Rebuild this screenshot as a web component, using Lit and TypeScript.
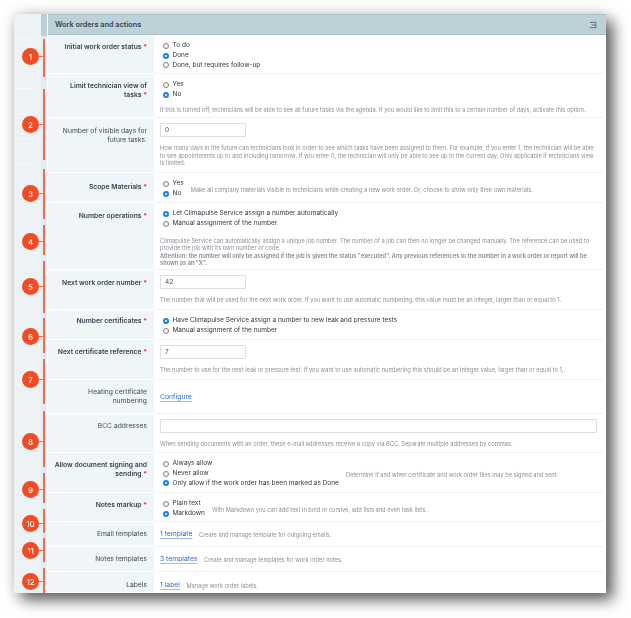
import { LitElement, html, css, nothing } from "lit";
import { customElement } from "lit/decorators.js";

type Opt = [string, boolean];
interface Row {
  h: number; pt: number; lp: number; label: string; bold?: boolean; star?: boolean;
  radios?: Opt[]; input?: string; wide?: boolean; link?: string; help?: any; inlineHelp?: string; helpGap?: number; helpPt?: number;
}

const rows: Row[] = [
  { h: 39, pt: 5, lp: 7, label: "Initial work order status", bold: true, star: true,
    radios: [["To do", false], ["Done", true], ["Done, but requires follow-up", false]] },
  { h: 44, pt: 5, lp: 7, label: "Limit technician view of\ntasks", bold: true, star: true,
    radios: [["Yes", false], ["No", true]], helpPt: 6,
    help: "If this is turned off, technicians will be able to see all future tasks via the agenda. If you would like to limit this to a certain number of days, activate this option." },
  { h: 55, pt: 5, lp: 8, label: "Number of visible days for\nfuture tasks.", input: "0", helpPt: 7,
    help: "How many days in the future can technicians look in order to see which tasks have been assigned to them. For example, if you enter 1, the technician will be able to see appointments up to and including tomorrow. If you enter 0, the technician will only be able to see up to the current day. Only applicable if technicians view is limited." },
  { h: 30, pt: 5, lp: 9, label: "Scope Materials", bold: true, star: true, radios: [["Yes", false], ["No", true]],
    inlineHelp: "Make all company materials visible to technicians while creating a new work order. Or, choose to show only their own materials." },
  { h: 67, pt: 5, lp: 8, label: "Number operations", bold: true, star: true, helpPt: 8,
    radios: [["Let Climapulse Service assign a number automatically", true], ["Manual assignment of the number", false]],
    help: html`Climapulse Service can automatically assign a unique job number. The number of a job can then no longer be changed manually. The reference can be used to provide the job with its own number or code.<br><b>Attention: the number will only be assigned if the job is given the status "executed". Any previous references to the number in a work order or report will be shown as an "X".</b>` },
  { h: 40, pt: 5, lp: 8, label: "Next work order number", bold: true, star: true, input: "42", helpPt: 7,
    help: "The number that will be used for the next work order. If you want to use automatic numbering, this value must be an integer, larger than or equal to 1." },
  { h: 30, pt: 5, lp: 6, label: "Number certificates", bold: true, star: true,
    radios: [["Have Climapulse Service assign a number to new leak and pressure tests", true], ["Manual assignment of the number", false]] },
  { h: 40, pt: 5, lp: 7, label: "Next certificate reference", bold: true, star: true, input: "7", helpPt: 7,
    help: "The number to use for the next leak or pressure test. If you want to use automatic numbering this should be an integer value, larger than or equal to 1,." },
  { h: 34, pt: 12, lp: 7, label: "Heating certificate\nnumbering", link: "Configure" },
  { h: 39, pt: 5, lp: 7, label: "BCC addresses", input: "", wide: true, helpPt: 7,
    help: "When sending documents with an order, these e-mail addresses receive a copy via BCC. Separate multiple addresses by commas." },
  { h: 40, pt: 5, lp: 7, label: "Allow document signing and\nsending", bold: true, star: true,
    radios: [["Always allow", false], ["Never allow", false], ["Only allow if the work order has been marked as Done", true]],
    inlineHelp: "Determine if and when certificate and work order files may be signed and sent.", helpGap: 7 },
  { h: 29, pt: 5, lp: 7, label: "Notes markup", bold: true, star: true, radios: [["Plain text", false], ["Markdown", true]],
    inlineHelp: "With Markdown you can add text in bold or cursive, add lists and even task lists.", helpGap: 7 },
  { h: 25, pt: 7, lp: 7, label: "Email templates", link: "1 template", inlineHelp: "Create and manage template for outgoing emails.", helpGap: 6.5 },
  { h: 25, pt: 7, lp: 7, label: "Notes templates", link: "3 templates", inlineHelp: "Create and manage templates for work order notes.", helpGap: 6.5 },
  { h: 21, pt: 8, lp: 8, label: "Labels", link: "1 label", inlineHelp: "Manage work order labels.", helpGap: 6.5 },
];

const marks = [
  [25, 38, 42], [75, 71, 110], [155, 50, 179], [211, 30, 227], [247, 52, 272], [304, 35, 322],
  [345, 45, 365], [397, 56, 427], [459, 30, 475], [495, 24, 509], [524, 24, 536], [554, 25, 567],
];

@customElement("app-root")
export class AppRoot extends LitElement {
  static styles = css`
    :host { display: block; width: 631px; height: 618px; padding: 14px; box-sizing: border-box; background: #fff;
      font-family: Inter, "Liberation Sans", sans-serif; color: #2f3a45; overflow: hidden; }
    .card { position: relative; width: 592px; height: 579px; background: #fff; display: flex; filter: blur(0.35px);
      box-shadow: 7px 7px 14px rgba(0,0,0,.62), 0 0 16px rgba(0,0,0,.14); }
    .side { width: 27px; flex: none; background: #edf2f5; }
    .sep { height: 24px; margin-right: 6px; border-bottom: 1px solid #f6f9fa; }
    .strip { width: 6px; flex: none; background: #e6edf0; }
    .strip div { height: 22px; background: #bcd0d6; }
    .main { flex: 1; min-width: 0; border-left: 1px solid #fff; overflow: hidden; }
    .head { height: 21px; background: #bdd2d8; border-top: 1px solid #a9c1c9; border-bottom: 1px solid #a9c1c9; box-sizing: border-box;
      display: flex; align-items: center; justify-content: space-between; padding: 0 9px 0 7px;
      font-size: 7.3px; font-weight: 600; color: #34424f; }
    .head svg { display: block; width: 8px; height: 8px; }
    .row { display: flex; box-sizing: border-box; }
    .lab { width: 106px; flex: none; background: #f0f6f7; text-align: right; padding: 0 7px 0 2px; box-sizing: border-box; white-space: pre-line;
      font-size: 6.75px; line-height: 9.3px; color: #3f4a55; border-bottom: 1px solid #fff; }
    .lab.b { font-weight: 600; color: #37424e; }
    .star { color: #e0186c; font-weight: 700; }
    .val { flex: 1; min-width: 0; padding-left: 6px; margin-right: 3px; border-bottom: 1px solid #eef0f1; box-sizing: border-box; }
    .val.last { border-bottom: 0; }
    .inl { display: flex; align-items: center; }
    .radios { flex: none; font-size: 6.5px; line-height: 9.75px; color: #2f3841; padding-top: 1px; }
    .r { display: flex; align-items: center; white-space: nowrap; }
    .dot { width: 6px; height: 6px; border-radius: 50%; border: .6px solid #7c7c7c; box-sizing: border-box; margin: 0 3.5px 0 3px; background: #fff; flex: none; }
    .dot.on { border: 2px solid #1a7ff0; background: #fff; }
    .help { font-size: 5.73px; line-height: 7.6px; color: #8a9097; padding-right: 6px; }
    .help b { font-weight: 600; color: #858b92; }
    .ih { font-size: 5.7px; color: #8a9097; white-space: nowrap; padding-top: 2px; }
    .inp { width: 85.5px; height: 14px; box-sizing: border-box; border: 1px solid #dcdfe2; border-radius: 1px; font-size: 6.6px; color: #4a535c;
      padding-left: 4px; display: flex; align-items: center; background: #fff; }
    .inp.wide { width: 437px; }
    .link { display: block; font-size: 6.8px; line-height: 9px; color: #2a6fd6; text-decoration: underline; text-underline-offset: 1.5px; text-decoration-color: #9dbcec; flex: none; }
    .bar { position: absolute; left: 29px; width: 2px; background: #f26a4f; }
    .tick { position: absolute; left: 16px; width: 14px; height: 1px; background: #f26a4f; }
    .badge { position: absolute; left: 8px; width: 17px; height: 17px; border-radius: 50%; background: #f54a22; color: #fff;
      font-size: 8px; font-weight: 500; display: flex; align-items: center; justify-content: center; }
  `;

  private val(r: Row, last: boolean) {
    const helpStyle = r.helpPt ? `padding-top:${r.helpPt}px` : "";
    const ih = r.inlineHelp
      ? html`<div class="ih" style="margin-left:${r.helpGap ?? 7}px">${r.inlineHelp}</div>` : nothing;
    const main = r.radios
      ? html`<div class="radios">${r.radios.map(([t, on]) => html`<div class="r"><span class="dot ${on ? "on" : ""}"></span>${t}</div>`)}</div>`
      : r.input !== undefined
        ? html`<div class="inp ${r.wide ? "wide" : ""}">${r.input}</div>`
        : r.link ? html`<span class="link">${r.link}</span>` : nothing;
    return html`<div class="val ${last ? "last" : ""}" style="padding-top:${r.pt}px">
      ${r.inlineHelp ? html`<div class="inl">${main}${ih}</div>` : main}
      ${r.help ? html`<div class="help" style=${helpStyle}>${r.help}</div>` : nothing}
    </div>`;
  }

  render() {
    return html`<div class="card">
      <div class="side">${Array.from({ length: 6 }, () => html`<div class="sep"></div>`)}</div>
      <div class="strip"><div></div></div>
      <div class="main">
        <div class="head"><span>Work orders and actions</span>
          <svg viewBox="0 0 8 8"><rect x="1" y="1" width="6" height="6" fill="#c9d7dc"/><path d="M1 1.4h5.8v5.2H1M2.5 4h4" fill="none" stroke="#44545f" stroke-width=".8"/></svg>
        </div>
        ${rows.map((r, i) => html`<div class="row" style="height:${r.h}px">
          <div class="lab ${r.bold ? "b" : ""}" style="padding-top:${r.lp}px">${r.label}${r.star ? html` <span class="star">*</span>` : nothing}</div>
          ${this.val(r, i === rows.length - 1)}
        </div>`)}
      </div>
      ${marks.map(([y, h, c], i) => html`
        <div class="bar" style="top:${y}px;height:${h}px"></div>
        <div class="tick" style="top:${c}px"></div>
        <div class="badge" style="top:${c - 8}px">${i + 1}</div>`)}
    </div>`;
  }
}
